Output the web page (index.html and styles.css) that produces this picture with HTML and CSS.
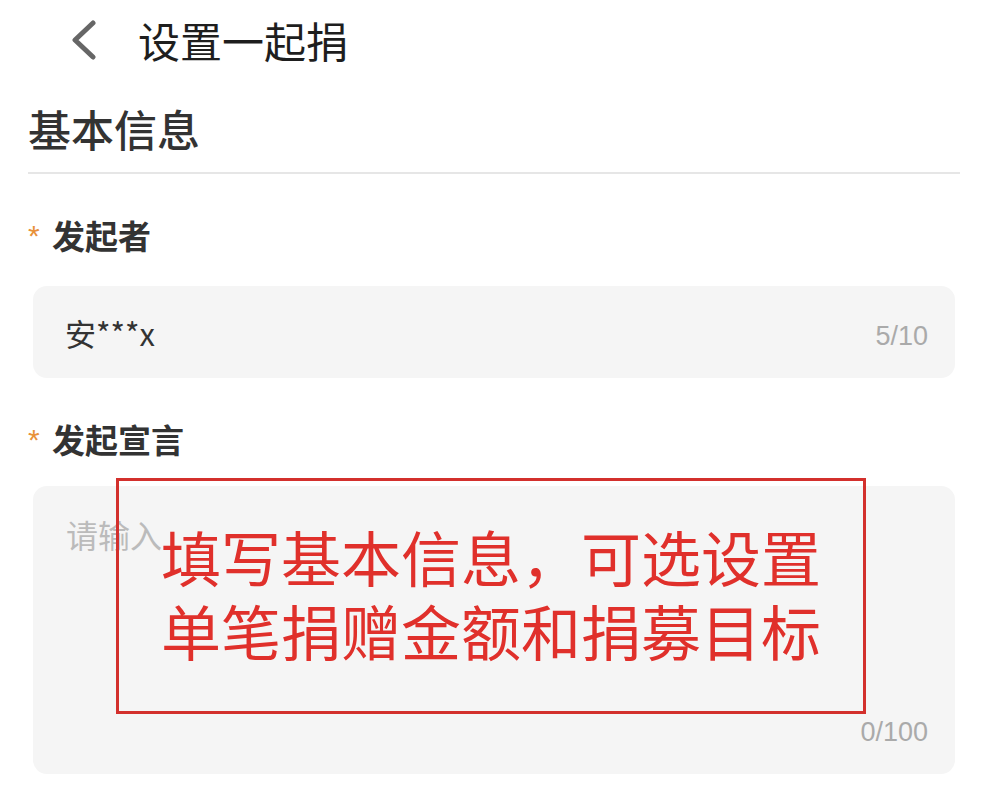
FILE: index.html
```html
<!DOCTYPE html>
<html lang="zh-CN">
<head>
  <meta charset="UTF-8">
  <meta name="viewport" content="width=device-width, initial-scale=1.0">
  <title>设置一起捐</title>
  <link rel="stylesheet" href="styles.css">
</head>
<body>
  <div class="header">
    <svg class="back" width="30" height="40" viewBox="0 0 30 40">
      <path d="M25 3 L7 20 L25 37" fill="none" stroke="#666" stroke-width="5" stroke-linecap="round" stroke-linejoin="round"/>
    </svg>
    <div class="title">设置一起捐</div>
  </div>

  <div class="page">
    <div class="section-title">基本信息</div>

    <div class="label"><span class="star">*</span>发起者</div>
    <div class="field input">
      <span class="value">安***x</span>
      <span class="count">5/10</span>
    </div>

    <div class="label"><span class="star">*</span>发起宣言</div>
    <div class="field textarea">
      <span class="placeholder">请输入</span>
      <span class="count">0/100</span>
    </div>
  </div>

  <!-- 标注框 -->
  <div class="note">
    <div>填写基本信息，可选设置</div>
    <div>单笔捐赠金额和捐募目标</div>
  </div>
</body>
</html>
```

FILE: styles.css
```css
body {
  margin: 0;
  background-color: #fff;
  font-family: "Noto Sans CJK SC", "Noto Sans", sans-serif;
  color: #222;
  width: 991px;
  height: 799px;
  position: relative;
  overflow: hidden;
}
.header {
  display: flex;
  align-items: center;
  height: 80px;
  padding-left: 68px;
}
.back {
  display: block;
}
.title {
  margin-left: 40px;
  font-size: 42px;
  line-height: 56px;
  color: #1e1e1e;
}
.page {
  width: 932px;
  padding-left: 28px;
}
.section-title {
  margin-top: 20px;
  font-size: 43px;
  line-height: 56px;
  font-weight: 500;
  color: #333;
  padding-bottom: 16px;
  border-bottom: 2px solid #e6e6e6;
}
.label {
  display: flex;
  align-items: center;
  margin-top: 39px;
  height: 44px;
  font-size: 33px;
  font-weight: 700;
  color: #333;
}
.star {
  color: #e8913a;
  font-family: "Liberation Sans", Arial, sans-serif;
  font-size: 30px;
  font-weight: 400;
  width: 24px;
  margin-top: 2px;
}
.field {
  margin-left: 5px;
  width: 922px;
  background-color: #f5f5f5;
  border-radius: 14px;
  box-sizing: border-box;
  display: flex;
  justify-content: space-between;
}
.input {
  margin-top: 29px;
  height: 92px;
  align-items: center;
  padding: 0 27px 0 32px;
}
.textarea {
  margin-top: 25px;
  height: 288px;
  flex-direction: column;
  padding: 26px 27px 27px 33px;
}
.value {
  font-size: 31px;
  color: #333;
}
.placeholder {
  font-size: 32px;
  line-height: 44px;
  color: #bbb;
}
.count {
  font-family: "Liberation Sans", Arial, sans-serif;
  font-size: 27px;
  line-height: 30px;
  color: #aaa;
  margin-top: 8px;
}
.textarea .count {
  align-self: flex-end;
  margin-top: 0;
}
.note {
  position: absolute;
  left: 116px;
  top: 478px;
  width: 750px;
  height: 236px;
  box-sizing: border-box;
  border: 3px solid #d3302c;
  display: flex;
  flex-direction: column;
  justify-content: center;
  align-items: center;
  font-size: 60px;
  line-height: 74px;
  color: #e0302b;
  padding-bottom: 6px;
}
```
